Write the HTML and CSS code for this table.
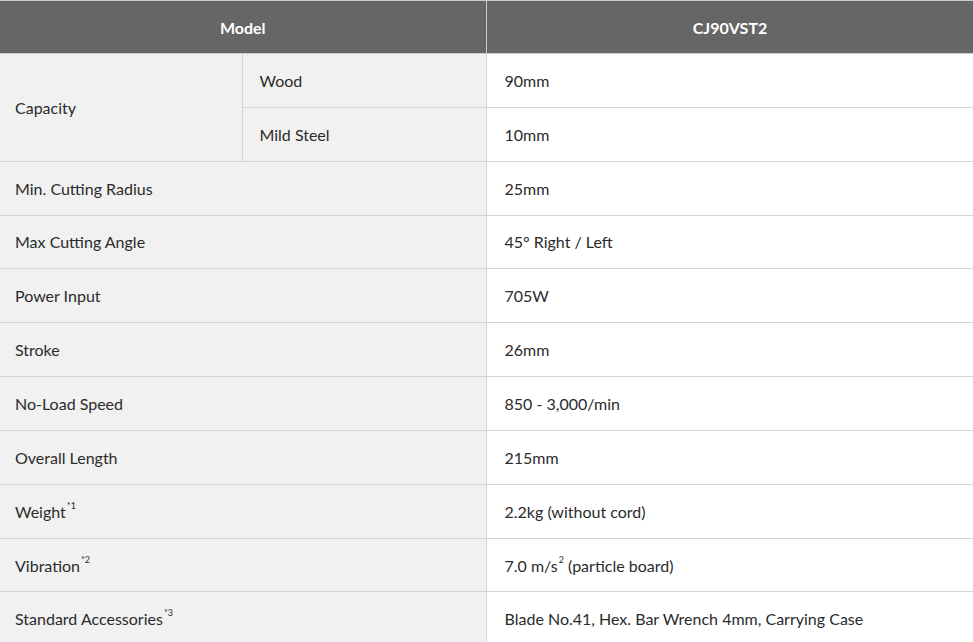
FILE: index.html
```html
<!DOCTYPE html>
<html>
<head>
<meta charset="utf-8">
<link rel="stylesheet" href="styles.css">
</head>
<body>
<table class="spec">
  <colgroup>
    <col class="c1"><col class="c2"><col class="c3">
  </colgroup>
  <thead>
    <tr><th class="first" colspan="2">Model</th><th>CJ90VST2</th></tr>
  </thead>
  <tbody>
    <tr><td class="label first" rowspan="2">Capacity</td><td class="label sub">Wood</td><td class="val">90mm</td></tr>
    <tr><td class="label sub">Mild Steel</td><td class="val">10mm</td></tr>
    <tr><td class="label first" colspan="2">Min. Cutting Radius</td><td class="val">25mm</td></tr>
    <tr><td class="label first" colspan="2">Max Cutting Angle</td><td class="val">45° Right / Left</td></tr>
    <tr><td class="label first" colspan="2">Power Input</td><td class="val">705W</td></tr>
    <tr><td class="label first" colspan="2">Stroke</td><td class="val">26mm</td></tr>
    <tr><td class="label first" colspan="2">No-Load Speed</td><td class="val">850 - 3,000/min</td></tr>
    <tr><td class="label first" colspan="2">Overall Length</td><td class="val">215mm</td></tr>
    <tr><td class="label first" colspan="2">Weight<sup>*1</sup></td><td class="val">2.2kg (without cord)</td></tr>
    <tr><td class="label first" colspan="2">Vibration<sup>*2</sup></td><td class="val">7.0 m/s<sup>2</sup> (particle board)</td></tr>
    <tr><td class="label first" colspan="2">Standard Accessories<sup>*3</sup></td><td class="val">Blade No.41, Hex. Bar Wrench 4mm, Carrying Case</td></tr>
    <tr><td class="label first" colspan="2">&nbsp;</td><td class="val">&nbsp;</td></tr>
  </tbody>
</table>
</body>
</html>
```
FILE: styles.css
```css
html, body {
  margin: 0;
  padding: 0;
  background: #ffffff;
}
body {
  font-family: Lato, "Noto Sans", sans-serif;
  font-size: 16px;
  color: #2b2b2b;
}
.spec {
  border-collapse: collapse;
  width: 974px;
  table-layout: fixed;
  border-top: 1px solid #cccccc;
}
.c1 { width: 242px; }
.c2 { width: 244px; }
.c3 { width: 488px; }
.spec th {
  background: #666666;
  color: #ffffff;
  font-weight: 700;
  height: 52px;
  padding: 0;
  text-align: center;
  border: 1px solid #cccccc;
  border-top: none;
}
.spec td {
  height: 51.85px;
  padding: 1px 0 0 0;
  border: 1px solid #d4d4d4;
  vertical-align: middle;
  line-height: 20px;
}
.spec .first {
  border-left: none;
}
.label {
  background: #f1f1f1;
  padding-left: 15px !important;
}
.label.sub {
  padding-left: 17px !important;
}
.val {
  background: #ffffff;
  padding-left: 18px !important;
}
sup {
  font-size: 9px;
  line-height: 0;
  vertical-align: 9px;
  margin-left: 1px;
}
```
